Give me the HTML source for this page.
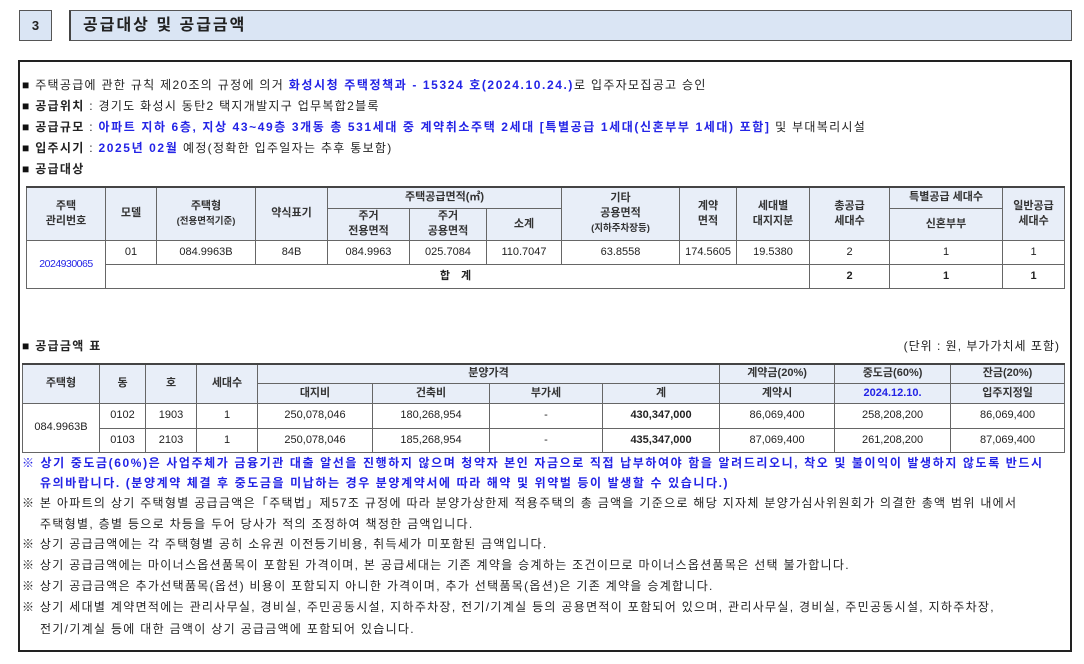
<!DOCTYPE html>
<html><head><meta charset="utf-8"><style>
*{margin:0;padding:0;box-sizing:border-box}
body{width:1084px;height:664px;background:#fff;position:relative;font-family:"Liberation Sans","Noto Sans CJK KR",sans-serif;color:#222;overflow:hidden}
.abs{position:absolute}
.ln{position:absolute;left:22px;font-size:12px;white-space:nowrap;line-height:16px;letter-spacing:1.3px}
.b{color:#2323e6;font-weight:bold;letter-spacing:1.6px}
.sq{font-weight:bold;color:#111}
table{position:absolute;border-collapse:collapse;font-size:11px;table-layout:fixed}
td{border:1px solid #666;text-align:center;vertical-align:middle;line-height:15px;padding:0}
tr.h td{background:#e8eef8;font-weight:bold;color:#333}
table{border-top:2px solid #444}
.sm{font-size:9.5px;font-weight:bold}
</style></head><body>
<div class="abs" style="left:19px;top:10px;width:33px;height:31px;border:1px solid #555;background:#dae5f4;font-weight:bold;font-size:13px;text-align:center;line-height:29px">3</div>
<div class="abs" style="left:69px;top:10px;width:1003px;height:31px;border:1px solid #555;border-left:2px solid #444;background:#dae5f4;font-weight:bold;font-size:16px;line-height:29px;padding-left:12px;letter-spacing:2px">공급대상 및 공급금액</div>
<div class="abs" style="left:18px;top:60px;width:1054px;height:592px;border:2px solid #222"></div>

<div class="ln" style="top:77px"><span class="sq">■</span> 주택공급에 관한 규칙 제20조의 규정에 의거 <span class="b">화성시청 주택정책과 - 15324 호(2024.10.24.)</span>로 입주자모집공고 승인</div>
<div class="ln" style="top:98px"><span class="sq">■</span> <b>공급위치</b> : 경기도 화성시 동탄2 택지개발지구 업무복합2블록</div>
<div class="ln" style="top:119px"><span class="sq">■</span> <b>공급규모</b> : <span class="b">아파트 지하 6층, 지상 43~49층 3개동 총 531세대 중 계약취소주택 2세대 [특별공급 1세대(신혼부부 1세대) 포함]</span> 및 부대복리시설</div>
<div class="ln" style="top:140px"><span class="sq">■</span> <b>입주시기</b> : <span class="b">2025년 02월</span> 예정(정확한 입주일자는 추후 통보함)</div>
<div class="ln" style="top:161px"><span class="sq">■</span> <b>공급대상</b></div>

<table style="left:26px;top:186px;width:1038px">
<colgroup><col style="width:79px"><col style="width:51px"><col style="width:99px"><col style="width:72px"><col style="width:82px"><col style="width:77px"><col style="width:75px"><col style="width:118px"><col style="width:57px"><col style="width:73px"><col style="width:80px"><col style="width:113px"><col style="width:62px"></colgroup>
<tr class="h" style="height:21px"><td rowspan="2">주택<br>관리번호</td><td rowspan="2">모델</td><td rowspan="2">주택형<br><span class="sm">(전용면적기준)</span></td><td rowspan="2">약식표기</td><td colspan="3">주택공급면적(㎡)</td><td rowspan="2">기타<br>공용면적<br><span class="sm">(지하주차장등)</span></td><td rowspan="2">계약<br>면적</td><td rowspan="2">세대별<br>대지지분</td><td rowspan="2">총공급<br>세대수</td><td>특별공급 세대수</td><td rowspan="2">일반공급<br>세대수</td></tr>
<tr class="h" style="height:32px"><td>주거<br>전용면적</td><td>주거<br>공용면적</td><td>소계</td><td>신혼부부</td></tr>
<tr style="height:24px"><td rowspan="2" style="color:#2323e6;font-size:10.5px;letter-spacing:-0.5px">2024930065</td><td>01</td><td>084.9963B</td><td>84B</td><td>084.9963</td><td>025.7084</td><td>110.7047</td><td>63.8558</td><td>174.5605</td><td>19.5380</td><td>2</td><td>1</td><td>1</td></tr>
<tr style="height:24px"><td colspan="9" style="font-weight:bold;letter-spacing:4px">합 계</td><td><b>2</b></td><td><b>1</b></td><td><b>1</b></td></tr>
</table>

<div class="ln" style="top:338px"><span class="sq">■</span> <b>공급금액 표</b></div>
<div class="ln" style="top:338px;left:auto;right:24px;letter-spacing:1px">(단위 : 원, 부가가치세 포함)</div>

<table style="left:22px;top:363px;width:1042px">
<colgroup><col style="width:77px"><col style="width:46px"><col style="width:51px"><col style="width:61px"><col style="width:115px"><col style="width:117px"><col style="width:113px"><col style="width:117px"><col style="width:115px"><col style="width:116px"><col style="width:114px"></colgroup>
<tr class="h" style="height:19px"><td rowspan="2">주택형</td><td rowspan="2">동</td><td rowspan="2">호</td><td rowspan="2">세대수</td><td colspan="4">분양가격</td><td>계약금(20%)</td><td>중도금(60%)</td><td>잔금(20%)</td></tr>
<tr class="h" style="height:20px"><td>대지비</td><td>건축비</td><td>부가세</td><td>계</td><td>계약시</td><td style="color:#2323e6">2024.12.10.</td><td>입주지정일</td></tr>
<tr style="height:25px"><td rowspan="2">084.9963B</td><td>0102</td><td>1903</td><td>1</td><td>250,078,046</td><td>180,268,954</td><td>-</td><td><b>430,347,000</b></td><td>86,069,400</td><td>258,208,200</td><td>86,069,400</td></tr>
<tr style="height:24px"><td>0103</td><td>2103</td><td>1</td><td>250,078,046</td><td>185,268,954</td><td>-</td><td><b>435,347,000</b></td><td>87,069,400</td><td>261,208,200</td><td>87,069,400</td></tr>
</table>

<div class="ln b" style="top:455px">※ 상기 중도금(60%)은 사업주체가 금융기관 대출 알선을 진행하지 않으며 청약자 본인 자금으로 직접 납부하여야 함을 알려드리오니, 착오 및 불이익이 발생하지 않도록 반드시</div>
<div class="ln b" style="top:475px;left:40px">유의바랍니다. (분양계약 체결 후 중도금을 미납하는 경우 분양계약서에 따라 해약 및 위약벌 등이 발생할 수 있습니다.)</div>
<div class="ln" style="top:495px">※ 본 아파트의 상기 주택형별 공급금액은「주택법」제57조 규정에 따라 분양가상한제 적용주택의 총 금액을 기준으로 해당 지자체 분양가심사위원회가 의결한 총액 범위 내에서</div>
<div class="ln" style="top:516px;left:40px">주택형별, 층별 등으로 차등을 두어 당사가 적의 조정하여 책정한 금액입니다.</div>
<div class="ln" style="top:536px">※ 상기 공급금액에는 각 주택형별 공히 소유권 이전등기비용, 취득세가 미포함된 금액입니다.</div>
<div class="ln" style="top:557px">※ 상기 공급금액에는 마이너스옵션품목이 포함된 가격이며, 본 공급세대는 기존 계약을 승계하는 조건이므로 마이너스옵션품목은 선택 불가합니다.</div>
<div class="ln" style="top:578px">※ 상기 공급금액은 추가선택품목(옵션) 비용이 포함되지 아니한 가격이며, 추가 선택품목(옵션)은 기존 계약을 승계합니다.</div>
<div class="ln" style="top:599px">※ 상기 세대별 계약면적에는 관리사무실, 경비실, 주민공동시설, 지하주차장, 전기/기계실 등의 공용면적이 포함되어 있으며, 관리사무실, 경비실, 주민공동시설, 지하주차장,</div>
<div class="ln" style="top:621px;left:40px">전기/기계실 등에 대한 금액이 상기 공급금액에 포함되어 있습니다.</div>
</body></html>
